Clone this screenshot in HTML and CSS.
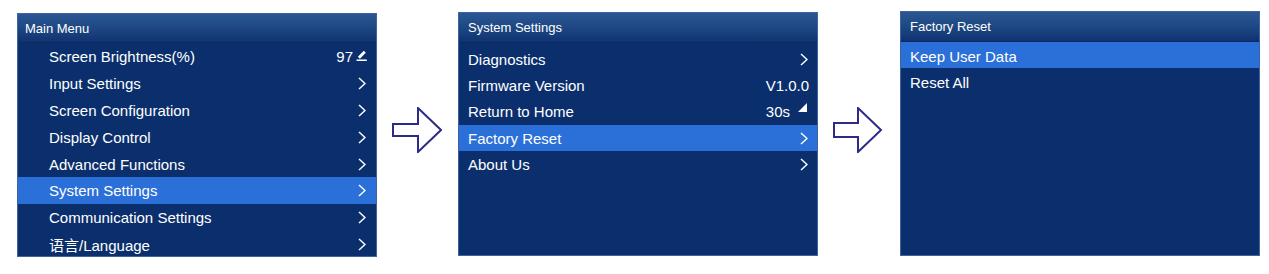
FILE: index.html
```html
<!DOCTYPE html>
<html lang="en">
<head>
  <meta charset="UTF-8">
  <title>Menu Flow</title>
  <link rel="stylesheet" href="styles.css">
</head>
<body>
  <div class="flow">
    <!-- Main menu -->
    <div class="panel panel-main">
      <div class="panel-head">Main Menu</div>
      <ul class="menu">
        <li><span>Screen Brightness(%)</span><span class="val">97 <svg class="edit" viewBox="0 0 10 10"><path d="M2.6 7 L8 1.6" stroke="#fff" stroke-width="2.6" fill="none"/><path d="M0.5 9.3 H9.8" stroke="#fff" stroke-width="1.4"/></svg></span></li>
        <li><span>Input Settings</span><svg class="chev" viewBox="0 0 8 13"><polyline points="1,1 7,6.5 1,12"/></svg></li>
        <li><span>Screen Configuration</span><svg class="chev" viewBox="0 0 8 13"><polyline points="1,1 7,6.5 1,12"/></svg></li>
        <li><span>Display Control</span><svg class="chev" viewBox="0 0 8 13"><polyline points="1,1 7,6.5 1,12"/></svg></li>
        <li><span>Advanced Functions</span><svg class="chev" viewBox="0 0 8 13"><polyline points="1,1 7,6.5 1,12"/></svg></li>
        <li class="active"><span>System Settings</span><svg class="chev" viewBox="0 0 8 13"><polyline points="1,1 7,6.5 1,12"/></svg></li>
        <li><span>Communication Settings</span><svg class="chev" viewBox="0 0 8 13"><polyline points="1,1 7,6.5 1,12"/></svg></li>
        <li><span>语言/Language</span><svg class="chev" viewBox="0 0 8 13"><polyline points="1,1 7,6.5 1,12"/></svg></li>
      </ul>
    </div>

    <div class="step">
      <svg class="arrow" viewBox="0 0 50 46"><polygon points="1,17 26,17 26,1 49,23 26,45 26,29 1,29" /></svg>
    </div>

    <!-- System settings -->
    <div class="panel panel-sys">
      <div class="panel-head">System Settings</div>
      <ul class="menu">
        <li><span>Diagnostics</span><svg class="chev" viewBox="0 0 8 13"><polyline points="1,1 7,6.5 1,12"/></svg></li>
        <li><span>Firmware Version</span><span class="val">V1.0.0</span></li>
        <li><span>Return to Home</span><span class="val">30s <svg class="tri" viewBox="0 0 8 8"><polygon points="0,8 8,8 8,0" fill="#fff"/></svg></span></li>
        <li class="active"><span>Factory Reset</span><svg class="chev" viewBox="0 0 8 13"><polyline points="1,1 7,6.5 1,12"/></svg></li>
        <li><span>About Us</span><svg class="chev" viewBox="0 0 8 13"><polyline points="1,1 7,6.5 1,12"/></svg></li>
      </ul>
    </div>

    <div class="step step-2">
      <svg class="arrow" viewBox="0 0 50 46"><polygon points="1,16 25,16 25,1 48,23 25,45 25,30 1,30" /></svg>
    </div>

    <!-- Factory reset -->
    <div class="panel panel-reset">
      <div class="panel-head">Factory Reset</div>
      <ul class="menu">
        <li class="active"><span>Keep User Data</span></li>
        <li><span>Reset All</span></li>
      </ul>
    </div>
  </div>
</body>
</html>
```

FILE: styles.css
```css
/* Generelle stilarter */
body {
  margin: 0;
  background: #fff;
  font-family: 'Liberation Sans', Arial, 'Noto Sans CJK SC', sans-serif;
  color: #fff;
}
.flow {
  display: flex;
  align-items: flex-start;
  padding: 12px 0 0 17px;
}
.panel {
  width: 360px;
  height: 244px;
  box-sizing: border-box;
  background: #0b2f6d;
  border: 1px solid #3f639c;
  display: flex;
  flex-direction: column;
}
.panel-main {
  margin-top: 1px;
}
.panel-reset {
  margin-top: -1px;
  height: 245px;
}
.panel-head {
  height: 29px;
  flex: none;
  box-sizing: border-box;
  padding: 0 7px;
  display: flex;
  align-items: center;
  font-size: 13px;
  background: linear-gradient(#2a5794, #1c4681 55%, #0f3370);
  border-bottom: 1px solid #0a2a60;
}
.panel-sys .panel-head,
.panel-reset .panel-head {
  padding-left: 9px;
  height: 30px;
}
.menu {
  list-style: none;
  margin: 0;
  padding: 0;
}
.menu li {
  height: 26.8px;
  display: flex;
  align-items: center;
  justify-content: space-between;
  padding: 1px 9px 0 31px;
  box-sizing: border-box;
  font-size: 15px;
}
.panel-sys .menu {
  padding-top: 3px;
}
.panel-sys .menu li {
  height: 26.3px;
  padding: 0 8px 0 9px;
}
.panel-reset .menu li {
  height: 26px;
  padding: 3px 9px 0 9px;
}
.menu li.active {
  background: #2b6fd8;
}
.val {
  display: flex;
  align-items: center;
}
.edit {
  width: 11px;
  height: 11px;
  margin-left: 3px;
  margin-top: -2px;
}
.tri {
  width: 9px;
  height: 9px;
  margin-left: 8px;
  margin-top: -9px;
  margin-right: 2px;
}
/* Pil til næste menu */
.chev {
  width: 8px;
  height: 13px;
  margin-right: 1px;
}
.chev polyline {
  fill: none;
  stroke: #fff;
  stroke-width: 1.5;
}
.step {
  width: 81px;
  flex: none;
  display: flex;
  justify-content: center;
  padding-top: 95px;
  box-sizing: border-box;
}
.step-2 {
  width: 82px;
  padding-top: 95px;
}
.arrow {
  width: 50px;
  height: 46px;
  margin-left: -2px;
}
.arrow polygon {
  fill: #fff;
  stroke: #2c2b88;
  stroke-width: 2;
}
```
